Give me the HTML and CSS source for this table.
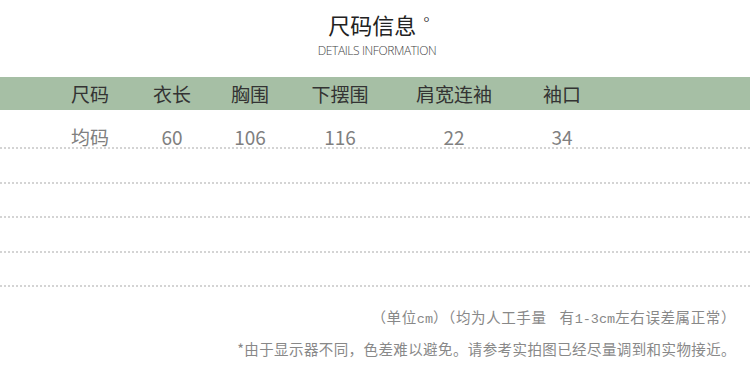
FILE: index.html
```html
<!DOCTYPE html>
<html lang="zh">
<head>
<meta charset="utf-8">
<title>尺码信息</title>
<link rel="stylesheet" href="styles.css">
</head>
<body>
<div class="page">
  <header class="head">
    <h1 class="title">尺码信息<span class="deg">°</span></h1>
    <p class="subtitle">DETAILS INFORMATION</p>
  </header>

  <div class="table">
    <div class="row row-head">
      <span>尺码</span><span>衣长</span><span>胸围</span><span>下摆围</span><span>肩宽连袖</span><span>袖口</span>
    </div>
    <div class="row row-data">
      <span>均码</span><span>60</span><span>106</span><span>116</span><span>22</span><span>34</span>
    </div>
    <div class="row row-empty"></div>
    <div class="row row-empty"></div>
    <div class="row row-empty"></div>
    <div class="row row-empty"></div>
  </div>

  <div class="notes">
    <p class="note note-first">（单位<span class="mono">cm</span>）（均为人工手量<span class="gap"></span>有<span class="mono">1-3cm</span>左右误差属正常）</p>
    <p class="note">*由于显示器不同，色差难以避免。请参考实拍图已经尽量调到和实物接近。</p>
  </div>
</div>
</body>
</html>
```

FILE: styles.css
```css
html, body {
  margin: 0;
  padding: 0;
  background: #ffffff;
}

.page {
  width: 750px;
  height: 366px;
  overflow: hidden;
  font-family: "Noto Sans CJK SC", "Noto Sans", sans-serif;
}

.head {
  display: flex;
  flex-direction: column;
  align-items: center;
  padding-top: 9px;
}

.title {
  margin: 0;
  font-size: 22px;
  font-weight: 400;
  line-height: 30px;
  color: #222222;
  padding-left: 8px;
}

.deg {
  display: inline-block;
  font-size: 15px;
  margin-left: 7px;
  vertical-align: 6px;
  line-height: 1;
  font-family: "Noto Sans", sans-serif;
  font-weight: 300;
}

.subtitle {
  margin: 5px 0 0 0;
  font-family: "Open Sans", "Liberation Sans", sans-serif;
  font-weight: 300;
  font-size: 12px;
  line-height: 14px;
  letter-spacing: -0.4px;
  color: #444444;
  padding-left: 4px;
}

.table {
  margin-top: 19px;
  display: flex;
  flex-direction: column;
}

.row {
  display: grid;
  grid-template-columns: 80px 84px 72px 108px 120px 96px;
  padding-left: 50px;
  box-sizing: border-box;
}

.row span {
  text-align: center;
}

.row-head {
  height: 33px;
  align-items: center;
  background: #a6bfa5;
  font-size: 19px;
  color: #333333;
}

.row-data {
  height: 39px;
  align-items: end;
  padding-bottom: 0;
  font-size: 19px;
  line-height: 20px;
  color: #808080;
  border-bottom: 2px dotted #d4d4d4;
}

.row-empty {
  height: 34.5px;
  border-bottom: 2px dotted #d4d4d4;
}

.notes {
  display: flex;
  flex-direction: column;
  align-items: flex-end;
  padding-right: 14px;
  margin-top: 15px;
}

.note {
  margin: 0;
  font-size: 14.5px;
  line-height: 29px;
  color: #888888;
  letter-spacing: 0.4px;
}

.note-first {
  letter-spacing: 0.6px;
}

.gap {
  display: inline-block;
  width: 13px;
}

.mono {
  font-family: "Liberation Mono", "DejaVu Sans Mono", monospace;
  font-size: 13.5px;
  letter-spacing: 0;
}
```
